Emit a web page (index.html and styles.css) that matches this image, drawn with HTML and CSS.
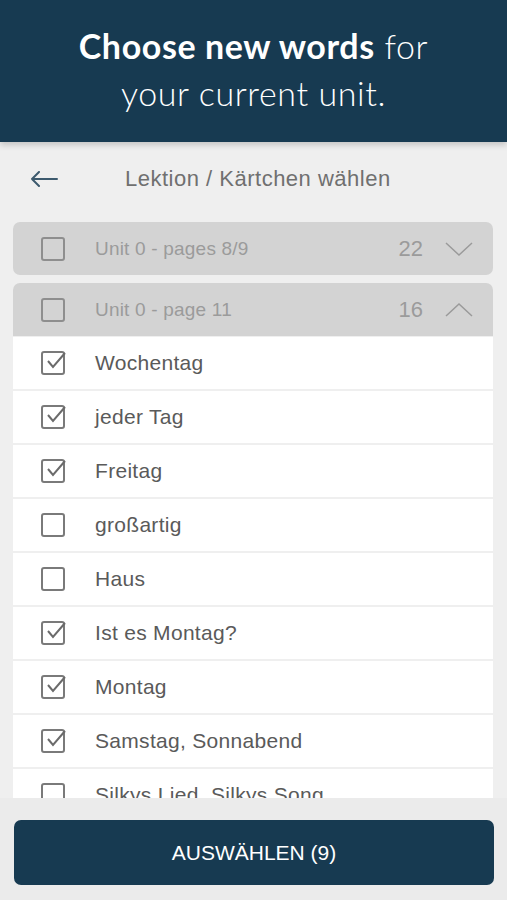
FILE: index.html
```html
<!DOCTYPE html>
<html>
<head>
<meta charset="utf-8">
<link rel="stylesheet" href="styles.css">
</head>
<body>
<div class="app">
  <header class="hero">
    <h1><strong>Choose new words</strong> for<br>your current unit.</h1>
  </header>
  <div class="titlebar">
    <svg class="back" width="28" height="16" viewBox="0 0 28 16"><path d="M27 8H2M9 1L2 8l7 7" fill="none" stroke="#3d5a6e" stroke-width="2" stroke-linecap="round" stroke-linejoin="round"/></svg>
    <span class="title">Lektion / Kärtchen wählen</span>
  </div>
  <div class="list">
    <div class="group">
      <span class="cb"></span>
      <span class="glabel">Unit 0 - pages 8/9</span>
      <span class="count">22</span>
      <svg class="chev" width="28" height="16" viewBox="0 0 28 16"><path d="M1 2l13 12L27 2" fill="none" stroke="#9a9a9a" stroke-width="1.5"/></svg>
    </div>
    <div class="group open">
      <span class="cb"></span>
      <span class="glabel">Unit 0 - page 11</span>
      <span class="count">16</span>
      <svg class="chev" width="28" height="16" viewBox="0 0 28 16"><path d="M1 14L14 2l13 12" fill="none" stroke="#9a9a9a" stroke-width="1.5"/></svg>
    </div>
    <div class="items">
      <div class="item"><span class="cb on"><svg viewBox="0 0 24 24"><path d="M5 11l5 6L22 3" fill="none" stroke="#6b6b6b" stroke-width="2"/></svg></span><span class="word">Wochentag</span></div>
      <div class="item"><span class="cb on"><svg viewBox="0 0 24 24"><path d="M5 11l5 6L22 3" fill="none" stroke="#6b6b6b" stroke-width="2"/></svg></span><span class="word">jeder Tag</span></div>
      <div class="item"><span class="cb on"><svg viewBox="0 0 24 24"><path d="M5 11l5 6L22 3" fill="none" stroke="#6b6b6b" stroke-width="2"/></svg></span><span class="word">Freitag</span></div>
      <div class="item"><span class="cb"></span><span class="word">großartig</span></div>
      <div class="item"><span class="cb"></span><span class="word">Haus</span></div>
      <div class="item"><span class="cb on"><svg viewBox="0 0 24 24"><path d="M5 11l5 6L22 3" fill="none" stroke="#6b6b6b" stroke-width="2"/></svg></span><span class="word">Ist es Montag?</span></div>
      <div class="item"><span class="cb on"><svg viewBox="0 0 24 24"><path d="M5 11l5 6L22 3" fill="none" stroke="#6b6b6b" stroke-width="2"/></svg></span><span class="word">Montag</span></div>
      <div class="item"><span class="cb on"><svg viewBox="0 0 24 24"><path d="M5 11l5 6L22 3" fill="none" stroke="#6b6b6b" stroke-width="2"/></svg></span><span class="word">Samstag, Sonnabend</span></div>
      <div class="item"><span class="cb"></span><span class="word">Silkys Lied, Silkys Song</span></div>
    </div>
  </div>
  <footer class="footer">
    <button class="select">AUSWÄHLEN (9)</button>
  </footer>
</div>
</body>
</html>
```

FILE: styles.css
```css
* { box-sizing: border-box; }
html, body { margin: 0; padding: 0; }
body {
  width: 507px;
  height: 900px;
  overflow: hidden;
  background: #efefef;
  font-family: "Liberation Sans", Arial, sans-serif;
}
.app {
  display: flex;
  flex-direction: column;
  height: 900px;
}
.hero {
  height: 142px;
  background: #173a51;
  display: flex;
  align-items: center;
  justify-content: center;
  position: relative;
  z-index: 2;
  box-shadow: 0 3px 6px rgba(0,0,0,0.18);
  flex: none;
}
.hero h1 {
  margin: 0;
  padding-bottom: 4px;
  color: #ffffff;
  font-family: Lato, "Open Sans", sans-serif;
  font-weight: 300;
  font-size: 34px;
  line-height: 47px;
  text-align: center;
  letter-spacing: 0.6px;
}
.hero h1 strong { font-weight: 700; }
.titlebar {
  height: 72px;
  display: flex;
  align-items: center;
  padding-left: 30px;
  flex: none;
  padding-top: 2px;
}
.back { flex: none; }
.title {
  margin-left: 67px;
  color: #707070;
  font-size: 22px;
  letter-spacing: 0.5px;
}
.list {
  height: 584px;
  overflow: hidden;
  padding: 8px 14px 0 13px;
  flex: none;
  display: flex;
  flex-direction: column;
}
.group {
  height: 53px;
  background: #d3d3d3;
  border-radius: 7px;
  display: flex;
  align-items: center;
  padding: 0 20px 0 28px;
  margin-bottom: 8px;
  flex: none;
}
.group.open {
  border-radius: 7px 7px 0 0;
  margin-bottom: 1px;
}
.cb {
  width: 24px;
  height: 24px;
  border: 2px solid #7a7a7a;
  border-radius: 3px;
  flex: none;
  position: relative;
}
.group .cb { border-color: #8e8e8e; }
.cb svg {
  position: absolute;
  left: 0;
  top: -3px;
  width: 24px;
  height: 24px;
}
.glabel {
  margin-left: 30px;
  color: #9b9b9b;
  font-size: 19px;
  letter-spacing: 0.2px;
  flex: 1;
}
.count {
  color: #9b9b9b;
  font-size: 22px;
  margin-right: 22px;
}
.items {
  display: flex;
  flex-direction: column;
  gap: 2px;
}
.item {
  height: 52px;
  background: #ffffff;
  display: flex;
  align-items: center;
  padding-left: 28px;
  flex: none;
}
.word {
  margin-left: 30px;
  color: #5a5a5a;
  font-size: 21px;
  letter-spacing: 0.3px;
}
.footer {
  flex: 1;
  background: #ebebeb;
  padding: 22px 13px 0 14px;
}
.select {
  width: 100%;
  height: 65px;
  border: none;
  border-radius: 7px;
  background: #173a51;
  color: #ffffff;
  font-family: "Liberation Sans", Arial, sans-serif;
  font-size: 21px;
  letter-spacing: 0;
  padding: 0;
}
```
